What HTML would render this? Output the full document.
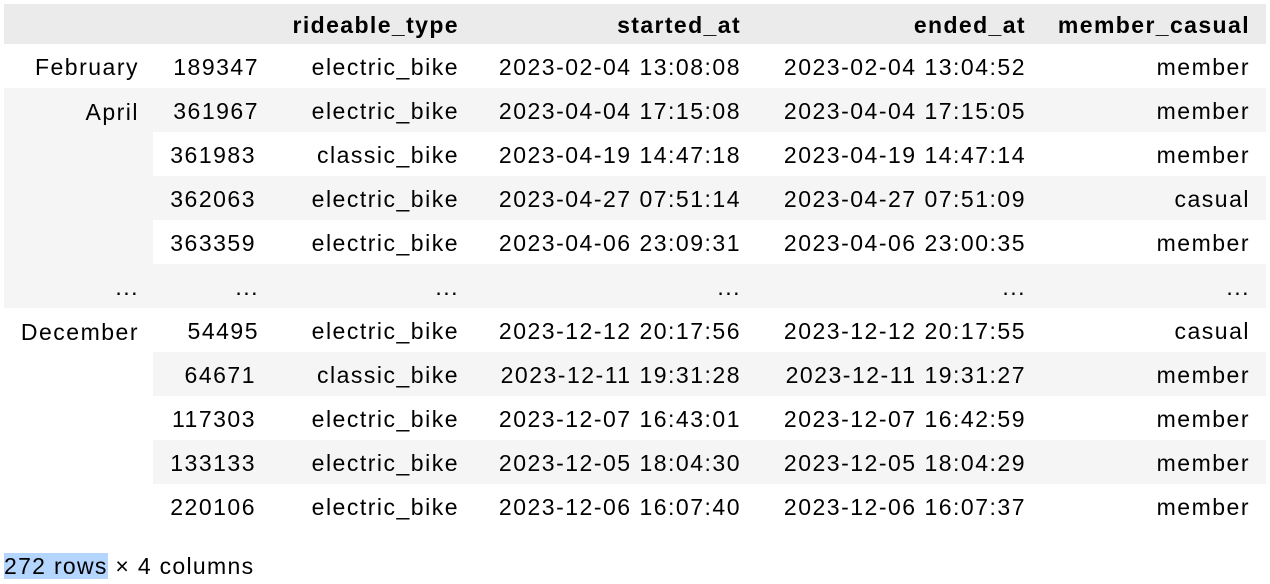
<!DOCTYPE html><html><head><style>
body{margin:0;background:#fff;font-family:"Liberation Sans",sans-serif;font-size:23px;letter-spacing:1.5px;color:#000}
table{position:absolute;left:4px;top:4px;border-collapse:collapse;table-layout:fixed;width:1262px}
td,th{height:44px;padding:2px 11px 0 0;text-align:right;white-space:nowrap;box-sizing:border-box}
td:first-child{padding-right:14px}
td:last-child,th:last-child{padding-right:16px}
th{font-weight:bold;background:#ebebeb;height:40px;letter-spacing:1.4px}
tr.g td{background:#f5f5f5}
.f{position:absolute;left:4px;top:552px;font-size:23px;line-height:28px;letter-spacing:1.3px}
.f span{background:#b4d5fe}
</style></head><body>
<table>
<colgroup><col style="width:149px"><col style="width:117px"><col style="width:200px"><col style="width:282px"><col style="width:285px"><col style="width:229px"></colgroup>
<tr><th></th><th></th><th>rideable_type</th><th>started_at</th><th>ended_at</th><th>member_casual</th></tr>
<tr><td>February</td><td>189347</td><td>electric_bike</td><td>2023-02-04 13:08:08</td><td>2023-02-04 13:04:52</td><td>member</td></tr>
<tr class="g"><td rowspan="4" style="vertical-align:top;padding-top:11px">April</td><td>361967</td><td>electric_bike</td><td>2023-04-04 17:15:08</td><td>2023-04-04 17:15:05</td><td>member</td></tr>
<tr><td>361983</td><td>classic_bike</td><td>2023-04-19 14:47:18</td><td>2023-04-19 14:47:14</td><td>member</td></tr>
<tr class="g"><td>362063</td><td>electric_bike</td><td>2023-04-27 07:51:14</td><td>2023-04-27 07:51:09</td><td>casual</td></tr>
<tr><td>363359</td><td>electric_bike</td><td>2023-04-06 23:09:31</td><td>2023-04-06 23:00:35</td><td>member</td></tr>
<tr class="g"><td>...</td><td>...</td><td>...</td><td>...</td><td>...</td><td>...</td></tr>
<tr><td rowspan="5" style="vertical-align:top;padding-top:11px">December</td><td>54495</td><td>electric_bike</td><td>2023-12-12 20:17:56</td><td>2023-12-12 20:17:55</td><td>casual</td></tr>
<tr class="g"><td>64671</td><td>classic_bike</td><td>2023-12-11 19:31:28</td><td>2023-12-11 19:31:27</td><td>member</td></tr>
<tr><td>117303</td><td>electric_bike</td><td>2023-12-07 16:43:01</td><td>2023-12-07 16:42:59</td><td>member</td></tr>
<tr class="g"><td>133133</td><td>electric_bike</td><td>2023-12-05 18:04:30</td><td>2023-12-05 18:04:29</td><td>member</td></tr>
<tr><td>220106</td><td>electric_bike</td><td>2023-12-06 16:07:40</td><td>2023-12-06 16:07:37</td><td>member</td></tr>
</table>
<div class="f"><span>272 rows</span> × 4 columns</div>
</body></html>
